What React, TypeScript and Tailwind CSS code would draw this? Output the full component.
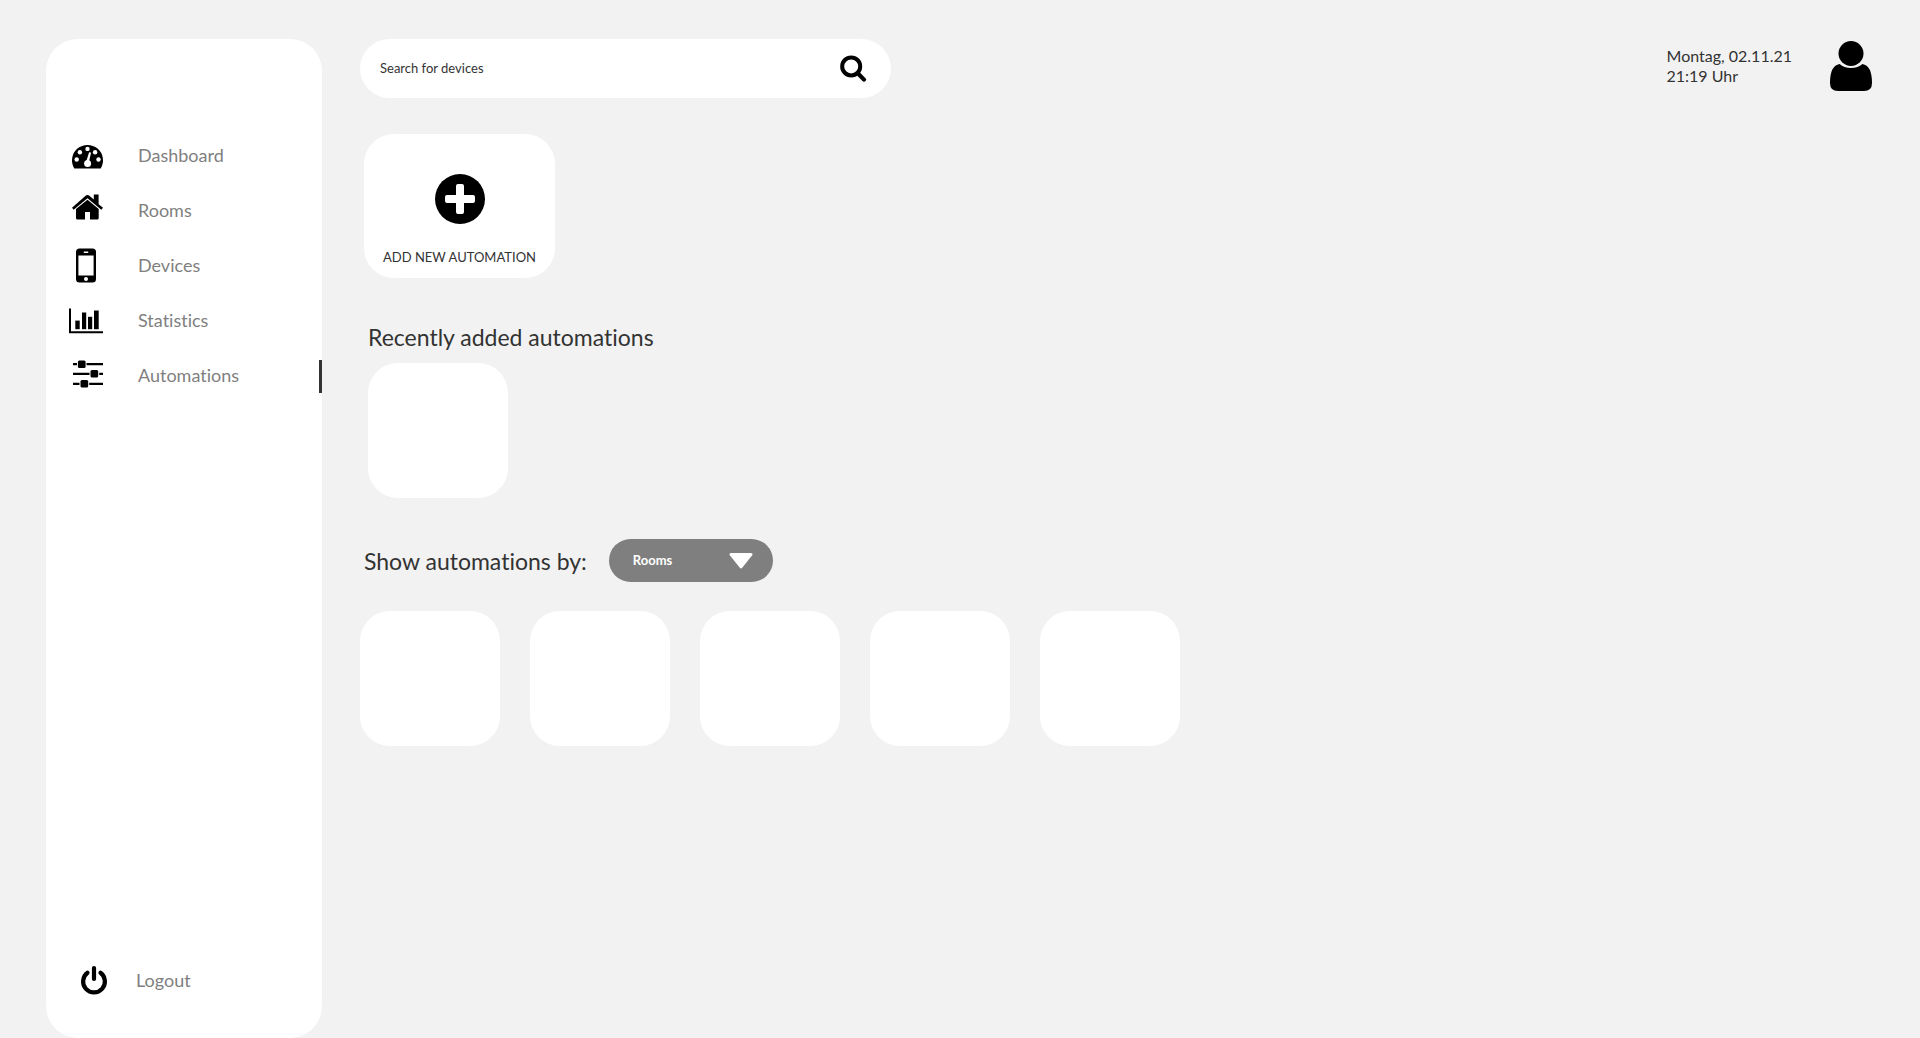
import type { ReactNode } from "react";

function NavIcon({ children }: { children: ReactNode }) {
  return (
    <svg viewBox="0 0 42 40" className="h-10 w-[42px] shrink-0 text-black" fill="currentColor" aria-hidden="true">
      {children}
    </svg>
  );
}

const dashboardIcon = (
  <NavIcon>
    <path d="M8.3 33.5A15.5 15.5 0 1 1 34.7 33.5Z" />
    <g fill="white">
      <circle cx="10.7" cy="24.5" r="2.2" />
      <circle cx="13.9" cy="17.2" r="2.2" />
      <circle cx="21.5" cy="13.9" r="2.2" />
      <circle cx="29.1" cy="17.2" r="2.2" />
      <circle cx="32.5" cy="24.5" r="2.2" />
      <circle cx="21.6" cy="28.4" r="3.5" />
      <path d="M20.4 26 23 17.6Q24.4 16.8 25 18.1L23 26.6Z" />
    </g>
  </NavIcon>
);

const homeIcon = (
  <NavIcon>
    <path d="M27.8 4.6h4.8v9.6l4.4 3.6-1.7 2L21.5 8.3 7.7 19.8 6 17.8 19.9 5.6q1.6-1.3 3.2 0l4.7 3.9Z" />
    <path d="M21.5 9.8 32.7 19v9q0 1.5-1.5 1.5H24v-7.6h-5v7.6h-7.5Q10 29.5 10 28v-9Z" />
  </NavIcon>
);

const phoneIcon = (
  <NavIcon>
    <rect x="10" y="3.5" width="20" height="34" rx="3.5" />
    <rect x="12.4" y="10.5" width="15.2" height="20" fill="white" />
    <rect x="17.6" y="6.6" width="4.8" height="1.4" rx="0.7" fill="white" />
    <circle cx="20" cy="34.1" r="2" fill="white" />
  </NavIcon>
);

const chartIcon = (
  <NavIcon>
    <path d="M3 8.5h2v22.7h32v2H3Z" />
    <rect x="9.3" y="20.6" width="4.4" height="8.6" />
    <rect x="16" y="12.5" width="4.2" height="16.7" />
    <rect x="22" y="16.8" width="4.2" height="12.4" />
    <rect x="28" y="10.5" width="4.7" height="18.7" />
  </NavIcon>
);

const slidersIcon = (
  <NavIcon>
    <path d="M7 8.1h4v2.2H7ZM20.5 8.1H37v2.2H20.5ZM7 17.7h16.5v2.2H7ZM33.2 17.7H37v2.2h-3.8ZM7 27.7h6.5v2.2H7ZM23.2 27.7H37v2.2H23.2Z" />
    <rect x="11.9" y="5.4" width="7.7" height="7.6" rx="1.5" />
    <rect x="24.5" y="15" width="7.7" height="7.6" rx="1.5" />
    <rect x="14.5" y="25" width="7.7" height="7.6" rx="1.5" />
  </NavIcon>
);

const powerIcon = (
  <NavIcon>
    <path
      d="M21.5 12.8A10.9 10.9 0 1 0 34.5 12.8M28 8v11"
      fill="none"
      stroke="currentColor"
      strokeWidth="4.2"
      strokeLinecap="round"
    />
  </NavIcon>
);

const navItems = [
  { label: "Dashboard", icon: dashboardIcon, active: false },
  { label: "Rooms", icon: homeIcon, active: false },
  { label: "Devices", icon: phoneIcon, active: false },
  { label: "Statistics", icon: chartIcon, active: false },
  { label: "Automations", icon: slidersIcon, active: true },
];

const automations = [1, 2, 3, 4, 5];

function Sidebar() {
  return (
    <aside className="flex w-[276px] shrink-0 flex-col rounded-[32px] bg-white pt-[88px] pb-[31px] text-lg text-[#7f7f7f]">
      <nav aria-label="Main">
        <ul>
          {navItems.map((item) => (
            <li key={item.label}>
              <a
                href="#"
                aria-current={item.active ? "page" : undefined}
                className="flex h-[55px] items-center gap-[30px] pl-5"
              >
                {item.icon}
                {item.label}
                {item.active && <span className="mt-1 ml-auto h-[33px] w-[3px] bg-[#333333]" />}
              </a>
            </li>
          ))}
        </ul>
      </nav>
      <button type="button" className="mt-auto flex h-[55px] items-center gap-7 pl-5">
        {powerIcon}
        Logout
      </button>
    </aside>
  );
}

function Header() {
  return (
    <header className="flex items-start justify-between">
      <form role="search" className="flex h-[59px] w-full max-w-[531px] items-center rounded-full bg-white pr-6 pl-5">
        <input
          type="search"
          aria-label="Search for devices"
          placeholder="Search for devices"
          className="min-w-0 flex-1 bg-transparent text-[13px] outline-none placeholder:text-[#333333] placeholder:opacity-100"
        />
        <button type="button" aria-label="Search">
          <svg viewBox="0 0 27 27" className="size-[27px] text-black" fill="none" stroke="currentColor" strokeLinecap="round" aria-hidden="true">
            <circle cx="11.2" cy="11.4" r="9" strokeWidth="4" />
            <path d="M18.5 19 24 24.6" strokeWidth="4.2" />
          </svg>
        </button>
      </form>
      <div className="flex items-center gap-[38px] pt-0.5">
        <p className="text-base leading-5">
          Montag, 02.11.21
          <br />
          21:19 Uhr
        </p>
        <button type="button" aria-label="Profile">
          <svg viewBox="0 0 42 50" className="h-[50px] w-[42px] text-black" fill="currentColor" aria-hidden="true">
            <circle cx="21" cy="12.5" r="12.5" />
            <path d="M9.6 23Q14 27 21 27T32.4 23Q42 24.5 42 42 42 50 34 50H8Q0 50 0 42 0 24.5 9.6 23Z" />
          </svg>
        </button>
      </div>
    </header>
  );
}

export default function App() {
  return (
    <div className="flex min-h-screen bg-[#f2f2f2] pt-[39px] pr-12 pl-[46px] font-['Lato',sans-serif] text-[#333333] [font-variant-ligatures:none]">
      <Sidebar />
      <main className="min-w-0 flex-1 pl-[38px]">
        <Header />

        <button
          type="button"
          className="mt-9 ml-1 flex h-36 w-[191px] flex-col items-center justify-between rounded-[30px] bg-white pt-10 pb-3 text-[13px] leading-[18px]"
        >
          <svg viewBox="0 0 50 50" className="size-[50px] text-black" aria-hidden="true">
            <circle cx="25" cy="25" r="25" fill="currentColor" />
            <path
              fill="white"
              d="M23 10h4q2 0 2 2v9h9q2 0 2 2v4q0 2-2 2h-9v9q0 2-2 2h-4q-2 0-2-2v-9h-9q-2 0-2-2v-4q0-2 2-2h9v-9q0-2 2-2Z"
            />
          </svg>
          ADD NEW AUTOMATION
        </button>

        <section className="mt-[41px] ml-2">
          <h2 className="mb-2 text-[23px] leading-9">Recently added automations</h2>
          <div className="h-[135px] w-[140px] rounded-[30px] bg-white" />
        </section>

        <section className="mt-[41px]">
          <div className="ml-1 flex items-center gap-[22px]">
            <label htmlFor="group-by" className="text-[23px] leading-9">
              Show automations by:
            </label>
            <div className="relative">
              <select
                id="group-by"
                className="h-[43px] w-[164px] appearance-none rounded-full bg-[#7f7f7f] pl-6 text-[13px] font-bold text-white"
              >
                <option>Rooms</option>
                <option>Devices</option>
              </select>
              <svg viewBox="0 0 24 16" className="pointer-events-none absolute top-[14px] right-5 h-4 w-6" fill="white" aria-hidden="true">
                <path d="M2 0H22Q24.5 0.5 23 2.6L13.2 14.8Q12 16 10.8 14.8L1 2.6Q-0.5 0.5 2 0Z" />
              </svg>
            </div>
          </div>
          <ul className="mt-[29px] flex flex-wrap gap-[30px]">
            {automations.map((id) => (
              <li key={id} className="h-[135px] w-[140px] rounded-[30px] bg-white" />
            ))}
          </ul>
        </section>
      </main>
    </div>
  );
}
